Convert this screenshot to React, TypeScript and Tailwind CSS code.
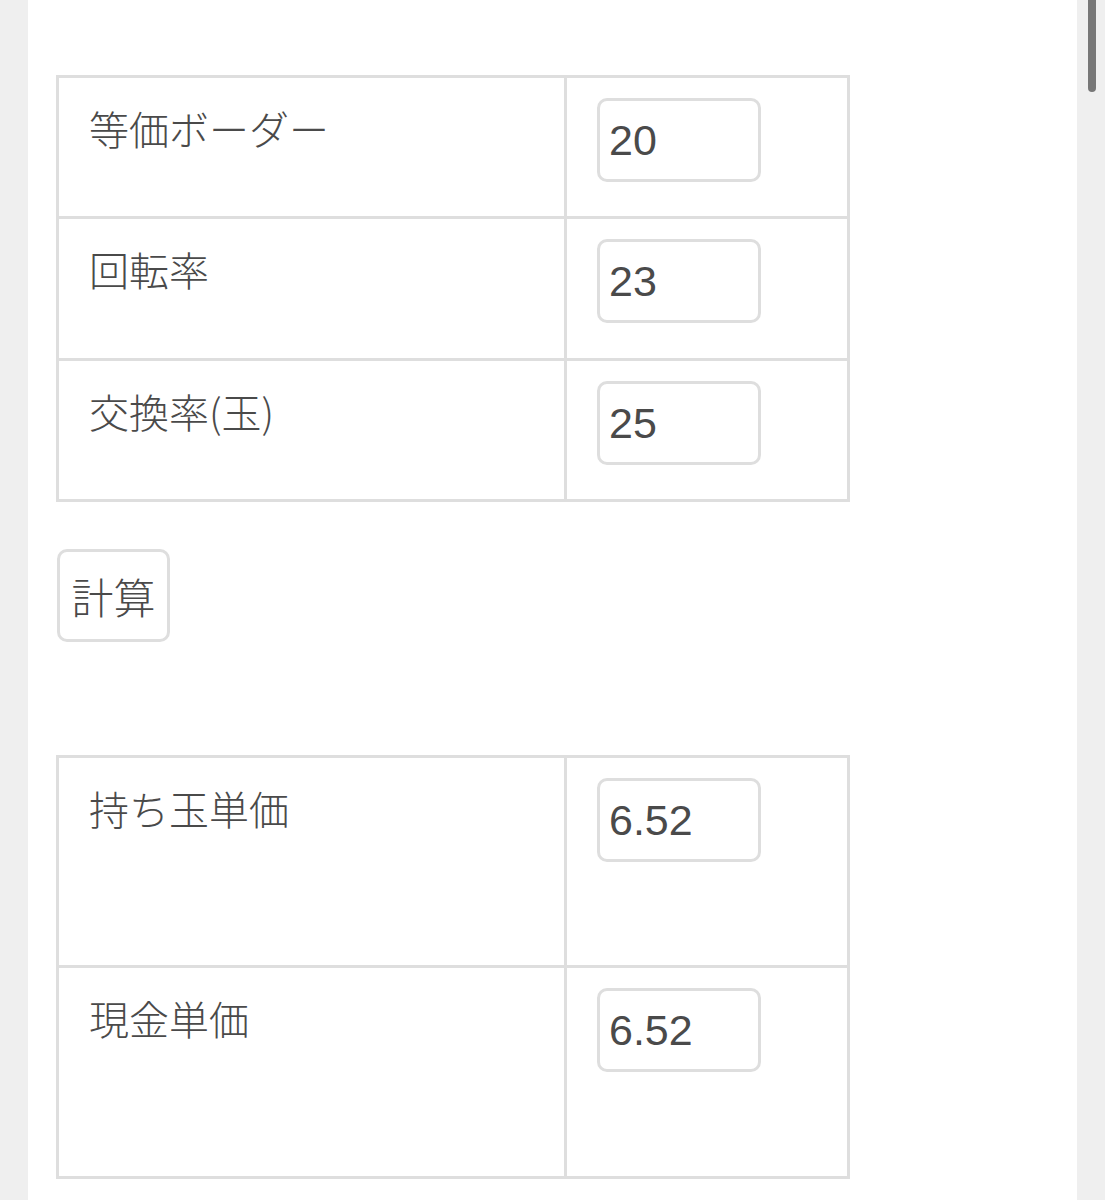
import React from "react";

const jp = { fontFamily: '"Noto Sans CJK JP", "Noto Sans", sans-serif' };
const num = { fontFamily: '"Liberation Sans", Arial, sans-serif' };

function Row({ label, value, h }: { label: string; value: string; h: string }) {
  return (
    <tr>
      <td className={`${h} w-[508px] border-[3px] border-[#dedede] align-top pl-[30px] pt-[20px]`}>
        <span className="block text-[40px] font-light leading-[60px] text-[#4a4a4a]" style={jp}>
          {label}
        </span>
      </td>
      <td className="border-[3px] border-[#dedede] align-top pl-[30px] pt-[20px]">
        <input
          readOnly
          value={value}
          className="block w-[164px] h-[84px] rounded-[10px] border-[3px] border-[#dedede] bg-white pl-[9px] text-[43px] text-[#4a4a4a] outline-none"
          style={num}
        />
      </td>
    </tr>
  );
}

export default function App() {
  return (
    <div className="flex min-h-[1200px] h-[1200px] overflow-hidden bg-[#efefef]">
      <div className="w-[28px] shrink-0" />
      <div className="w-[1049px] shrink-0 bg-white pl-[28px] pt-[75px]">
        <table className="border-collapse w-[794px]">
          <tbody>
            <Row label="等価ボーダー" value="20" h="h-[141px]" />
            <Row label="回転率" value="23" h="h-[142px]" />
            <Row label="交換率(玉)" value="25" h="h-[141px]" />
          </tbody>
        </table>
        <button
          className="mt-[47px] ml-[1px] block w-[113px] h-[93px] rounded-[10px] border-[3px] border-[#dedede] bg-white text-[42px] font-light leading-none text-[#4a4a4a]"
          style={jp}
        >
          計算
        </button>
        <table className="mt-[113px] border-collapse w-[794px]">
          <tbody>
            <Row label="持ち玉単価" value="6.52" h="h-[210px]" />
            <Row label="現金単価" value="6.52" h="h-[211px]" />
          </tbody>
        </table>
      </div>
      <div className="flex-1 pl-[11px]">
        <div className="w-[8px] h-[92px] rounded-b-full bg-[#777]" />
      </div>
    </div>
  );
}
